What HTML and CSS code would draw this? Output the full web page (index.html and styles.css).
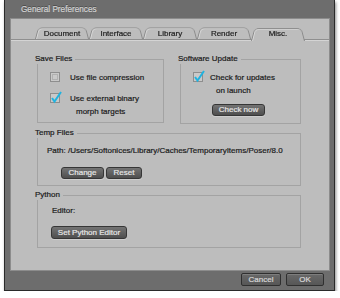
FILE: index.html
```html
<!DOCTYPE html>
<html>
<head>
<meta charset="utf-8">
<link rel="stylesheet" href="styles.css">
</head>
<body>
<div class="window">
  <div class="titlebar">General Preferences</div>
  <div class="panel">
    <div class="tabs">
      <div class="tab">Document</div>
      <div class="tab">Interface</div>
      <div class="tab">Library</div>
      <div class="tab">Render</div>
      <div class="tab active">Misc.</div>
    </div>
    <div class="content">
      <div class="toprow">
        <div class="group save">
          <div class="gtitle"><span class="lbl">Save Files</span><i class="gline"></i></div>
          <div class="gbody save-body">
            <div class="check">
              <svg class="box" width="12" height="12" viewBox="0 0 12 12"><rect x="0.5" y="1.5" width="9" height="9" fill="#c9c9c9" stroke="#8e8e8e"/><rect x="2.5" y="3.5" width="5" height="5" fill="none" stroke="#b0b0b0"/></svg>
              <span>Use file compression</span>
            </div>
            <div class="check second">
              <svg class="box" width="12" height="12" viewBox="0 0 12 12"><rect x="0.5" y="1.5" width="9" height="9" fill="#c9c9c9" stroke="#8e8e8e"/><path d="M2 6 L4.5 9.5 L11 0" fill="none" stroke="#1fb3e0" stroke-width="2"/></svg>
              <span>Use external binary<span class="l2">morph targets</span></span>
            </div>
          </div>
        </div>
        <div class="group update">
          <div class="gtitle"><span class="lbl">Software Update</span><i class="gline"></i></div>
          <div class="gbody update-body">
            <div class="check tight">
              <svg class="box" width="12" height="12" viewBox="0 0 12 12"><rect x="0.5" y="1.5" width="9" height="9" fill="#c9c9c9" stroke="#8e8e8e"/><path d="M2 6 L4.5 9.5 L11 0" fill="none" stroke="#1fb3e0" stroke-width="2"/></svg>
              <span>Check for updates<span class="l2">on launch</span></span>
            </div>
            <button class="btn check-now">Check now</button>
          </div>
        </div>
      </div>
      <div class="group temp">
        <div class="gtitle"><span class="lbl">Temp Files</span><i class="gline"></i></div>
        <div class="gbody temp-body">
          <div class="path">Path: /Users/Softonices/Library/Caches/TemporaryItems/Poser/8.0</div>
          <div class="btnrow">
            <button class="btn change">Change</button>
            <button class="btn reset">Reset</button>
          </div>
        </div>
      </div>
      <div class="group python">
        <div class="gtitle"><span class="lbl">Python</span><i class="gline"></i></div>
        <div class="gbody python-body">
          <div class="editor">Editor:</div>
          <button class="btn setpy">Set Python Editor</button>
        </div>
      </div>
    </div>
  </div>
  <div class="footer">
    <button class="fbtn cancel">Cancel</button>
    <button class="fbtn ok">OK</button>
  </div>
</div>
</body>
</html>
```
FILE: styles.css
```css
* { box-sizing: border-box; }
body {
  margin: 0;
  background: #ffffff;
  font-family: "Liberation Sans", Arial, sans-serif;
  font-size: 8px;
  color: #1a1a1a;
  -webkit-text-stroke: 0.2px currentColor;
}
.window {
  margin-left: 4px;
  width: 331px;
  height: 291px;
  background: #6d6d6d;
  border: 1px solid #2a2a2a;
  border-top: none;
  box-shadow: 1px 2px 3px rgba(0,0,0,0.45);
  display: flex;
  flex-direction: column;
}
.titlebar {
  height: 18px;
  padding-left: 16px;
  line-height: 20px;
  font-size: 8.2px;
  color: #d3d3d3;
  text-shadow: 0 -1px 0 rgba(0,0,0,0.35);
}
.panel {
  margin: 0 4px 0 5px;
  height: 253px;
  background: #bdbdbd;
  border: 1px solid #8c8c8c;
}
.tabs {
  display: flex;
  margin-top: 8px;
  padding-left: 24px;
  height: 13px;
  border-bottom: 1px solid #8f8f8f;
  box-shadow: 0 1px 0 #d4d4d4;
}
.tab {
  position: relative;
  z-index: 0;
  width: 54px;
  text-align: center;
  line-height: 13px;
  color: #1d1d1d;
}
.tab::before {
  content: "";
  position: absolute;
  left: 0;
  right: 0;
  top: -1px;
  bottom: 0;
  border: 1px solid #8a8a8a;
  border-bottom: none;
  border-radius: 5px 5px 0 0;
  background: #bdbdbd;
  box-shadow: inset 1px 1px 0 #d9d9d9;
  transform: perspective(14px) rotateX(8deg);
  transform-origin: bottom;
  z-index: -1;
}
.tab.active { z-index: 2; }
.tab.active::before { bottom: -2px; }
.content { padding-left: 24px; }
.toprow {
  display: flex;
  align-items: flex-start;
  gap: 14px;
  margin-top: 14px;
}
.group.save { width: 129px; }
.group.update { width: 123px; }
.group.temp { width: 266px; margin-top: 4px; }
.group.python { width: 266px; margin-top: 4px; }
.gtitle {
  display: flex;
  height: 10px;
  line-height: 10px;
}
.lbl { padding-right: 3px; }
.gline {
  flex: 1;
  height: 5px;
  margin-top: 5px;
  border-top: 1px solid #a3a3a3;
  border-right: 1px solid #a3a3a3;
}
.gbody {
  margin-left: 2px;
  border: 1px solid #a3a3a3;
  border-top: none;
}
.save-body { padding: 7px 0 4px 12px; }
.update-body { padding: 7px 0 7px 12px; }
.check {
  display: flex;
  gap: 8px;
  line-height: 13px;
}
.check.second { margin-top: 8px; }
.check.tight { gap: 5px; }
.box { flex: none; overflow: visible; }
.l2 { display: block; padding-left: 6px; }
.btn {
  display: block;
  height: 12px;
  padding: 0;
  border: 1px solid #363636;
  border-radius: 3px;
  background: linear-gradient(#747474, #4e4e4e);
  color: #e6e6e6;
  font-family: "Liberation Sans", Arial, sans-serif;
  font-size: 8px;
  line-height: 10px;
  text-align: center;
  box-shadow: 0 1px 0 rgba(255,255,255,0.25);
}
.check-now { width: 53px; margin: 7px 0 0 19px; }
.temp-body { padding: 7px 0 6px 9px; }
.path { line-height: 12px; }
.btnrow { display: flex; gap: 2px; margin: 10px 0 0 14px; }
.change { width: 43px; }
.reset { width: 36px; }
.python-body { padding: 5px 0 8px 14px; }
.editor { line-height: 12px; }
.setpy { width: 76px; height: 13px; margin: 9px 0 0 -1px; }
.footer {
  flex: 1;
  display: flex;
  justify-content: flex-end;
  align-items: flex-start;
  gap: 5px;
  padding: 2px 10px 0 0;
}
.fbtn {
  height: 13px;
  padding: 0;
  border: 1px solid #2f2f2f;
  border-radius: 2px;
  background: linear-gradient(#686868, #575757);
  color: #d8d8d8;
  font-family: "Liberation Sans", Arial, sans-serif;
  font-size: 8px;
  line-height: 11px;
  box-shadow: inset 0 1px 0 rgba(255,255,255,0.15);
}
.cancel { width: 40px; }
.ok { width: 38px; }
```
